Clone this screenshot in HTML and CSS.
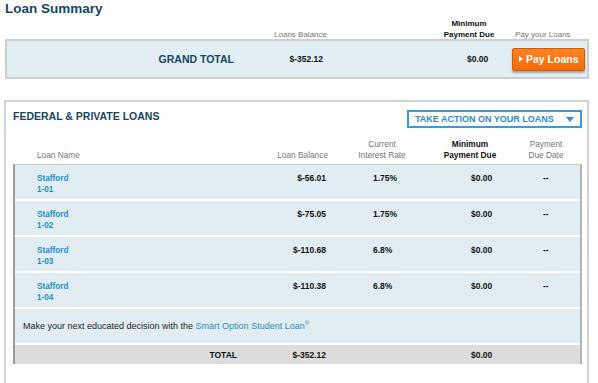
FILE: index.html
```html
<!DOCTYPE html>
<html lang="en">
  <head>
    <meta charset="UTF-8" />
    <meta name="viewport" content="width=device-width, initial-scale=1.0" />
    <title>Loan Summary</title>
    <link rel="stylesheet" href="styles.css">
  </head>
  <body>
    <h1 class="page-title">Loan Summary</h1>

    <div class="summary-head">
      <div></div>
      <div class="head-balance">Loans Balance</div>
      <div></div>
      <div class="head-min">Minimum<br>Payment Due</div>
      <div class="head-pay">Pay your Loans</div>
    </div>

    <div class="summary-box">
      <div class="grand-label">GRAND TOTAL</div>
      <div class="grand-balance">$-352.12</div>
      <div></div>
      <div class="grand-min">$0.00</div>
      <div class="grand-pay">
        <a href="#" class="btn-pay"><span class="arrow"></span>Pay Loans</a>
      </div>
    </div>

    <div class="loans-box">
      <div class="loans-top">
        <h2>FEDERAL &amp; PRIVATE LOANS</h2>
        <a href="#" class="take-action">TAKE ACTION ON YOUR LOANS <span class="caret"></span></a>
      </div>

      <div class="loans-head">
        <div class="col-name">Loan Name</div>
        <div class="col-balance">Loan Balance</div>
        <div class="col-rate">Current<br>Interest Rate</div>
        <div class="col-min strong">Minimum<br>Payment Due</div>
        <div class="col-due">Payment<br>Due Date</div>
      </div>

      <div class="loans-table">
        <div class="loan-row">
          <div class="col-name"><a href="#">Stafford<br>1-01</a></div>
          <div class="col-balance">$-56.01</div>
          <div class="col-rate">1.75%</div>
          <div class="col-min">$0.00</div>
          <div class="col-due">--</div>
        </div>
        <div class="loan-row">
          <div class="col-name"><a href="#">Stafford<br>1-02</a></div>
          <div class="col-balance">$-75.05</div>
          <div class="col-rate">1.75%</div>
          <div class="col-min">$0.00</div>
          <div class="col-due">--</div>
        </div>
        <div class="loan-row">
          <div class="col-name"><a href="#">Stafford<br>1-03</a></div>
          <div class="col-balance">$-110.68</div>
          <div class="col-rate">6.8%</div>
          <div class="col-min">$0.00</div>
          <div class="col-due">--</div>
        </div>
        <div class="loan-row">
          <div class="col-name"><a href="#">Stafford<br>1-04</a></div>
          <div class="col-balance">$-110.38</div>
          <div class="col-rate">6.8%</div>
          <div class="col-min">$0.00</div>
          <div class="col-due">--</div>
        </div>
        <div class="promo-row">
          Make your next educated decision with the <a href="#">Smart Option Student Loan<sup>®</sup></a>
        </div>
        <div class="total-row">
          <div class="col-name total-label">TOTAL</div>
          <div class="col-balance">$-352.12</div>
          <div class="col-rate"></div>
          <div class="col-min">$0.00</div>
          <div class="col-due"></div>
        </div>
      </div>
    </div>
  </body>
</html>
```

FILE: styles.css
```css
* {
  margin: 0;
  padding: 0;
  box-sizing: border-box;
}

body {
  font-family: "Liberation Sans", Arial, sans-serif;
  background: #fff;
  color: #111;
  padding: 0 9px 0 5px;
  font-size: 8px;
}

a {
  text-decoration: none;
  color: #1b8ecb;
}

.page-title {
  font-size: 13.5px;
  color: #17465f;
  line-height: 18px;
}

/* top summary */
.summary-head,
.summary-box {
  display: grid;
  grid-template-columns: 235px 89px 100px 80px 1fr;
}

.summary-head {
  height: 21px;
  align-items: end;
  color: #777;
  line-height: 11px;
  padding-bottom: 4px;
}

.head-balance {
  text-align: right;
  padding-right: 2px;
}

.head-min {
  text-align: center;
  color: #111;
  font-weight: bold;
}

.head-pay {
  padding-left: 6px;
}

.summary-box {
  height: 40px;
  background: #e2eef3;
  border: 2px solid #c9cfd2;
  align-items: center;
  font-weight: bold;
  font-size: 8.5px;
}

.grand-label {
  text-align: right;
  font-size: 10.5px;
  color: #17465f;
  padding-right: 8px;
}

.grand-balance {
  text-align: right;
  padding-right: 8px;
}

.grand-min {
  padding-left: 36px;
}

.grand-pay {
  padding-left: 1px;
}

.btn-pay {
  display: inline-flex;
  align-items: center;
  gap: 3px;
  height: 23px;
  padding: 0 5px 0 6px;
  background: linear-gradient(#ff8424, #f36a06);
  border: 1px solid #d65a00;
  border-radius: 2px;
  color: #fff;
  font-size: 10.5px;
  font-weight: bold;
  white-space: nowrap;
  box-shadow: 0 2px 2px rgba(0, 0, 0, 0.3);
}

.arrow {
  width: 0;
  height: 0;
  border-left: 4px solid #fff;
  border-top: 3.5px solid transparent;
  border-bottom: 3.5px solid transparent;
}

/* loans box */
.loans-box {
  margin-top: 21px;
  border: 2px solid #d3d3d3;
  border-bottom: none;
  margin-left: -1px;
  padding: 7px 5px 20px 7px;
}

.loans-top {
  display: flex;
  justify-content: space-between;
  align-items: flex-start;
}

.loans-top h2 {
  font-size: 10.5px;
  color: #17465f;
  line-height: 14px;
}

.take-action {
  display: flex;
  align-items: center;
  justify-content: space-between;
  width: 175px;
  height: 18px;
  margin-top: 1px;
  border: 2px solid #3b9ad8;
  color: #2b8ccf;
  font-weight: bold;
  font-size: 9px;
  padding: 0 6px;
}

.caret {
  width: 0;
  height: 0;
  border-top: 5px solid #2b8ccf;
  border-left: 4.5px solid transparent;
  border-right: 4.5px solid transparent;
}

.loans-head,
.loan-row,
.total-row {
  display: grid;
  grid-template-columns: 227px 90px 100px 80px 1fr;
}

.loans-head {
  margin-top: 11px;
  color: #777;
  font-size: 8.3px;
  line-height: 11px;
  align-items: end;
  padding-bottom: 3px;
}

.loans-head .col-name {
  padding-left: 24px;
}

.loans-head .col-balance {
  text-align: right;
  padding-right: 2px;
}

.loans-head .col-rate,
.loans-head .col-min,
.loans-head .col-due {
  text-align: center;
}

.loans-head .col-rate {
  padding-left: 4px;
}

.loans-head .strong {
  color: #111;
  font-weight: bold;
}

.loans-table {
  border-left: 2px solid #9c9c9c;
  border-right: 2px solid #b4b4b4;
  border-top: 1px solid #c8c8c8;
}

.loan-row {
  height: 36px;
  background: #e1edf2;
  border-bottom: 2px solid #fff;
  padding-top: 8px;
  font-weight: bold;
  font-size: 8.5px;
  line-height: 11px;
}

.loan-row .col-name {
  padding-left: 22px;
  font-size: 8.2px;
}

.col-balance {
  text-align: right;
  padding-right: 6px;
}

.loan-row .col-rate,
.total-row .col-rate {
  padding-left: 41px;
}

.loan-row .col-min,
.total-row .col-min {
  padding-left: 39px;
}

.loan-row .col-due {
  padding-left: 31px;
}

.promo-row {
  height: 36px;
  background: #e1edf2;
  border-bottom: 2px solid #fff;
  padding: 11px 0 0 8px;
  font-size: 9px;
  color: #222;
}

.promo-row sup {
  font-size: 6px;
}

.total-row {
  height: 19px;
  background: #dcdcdc;
  align-items: center;
  font-weight: bold;
  font-size: 8.5px;
}

.total-label {
  text-align: right;
  padding-right: 5px;
}
```
